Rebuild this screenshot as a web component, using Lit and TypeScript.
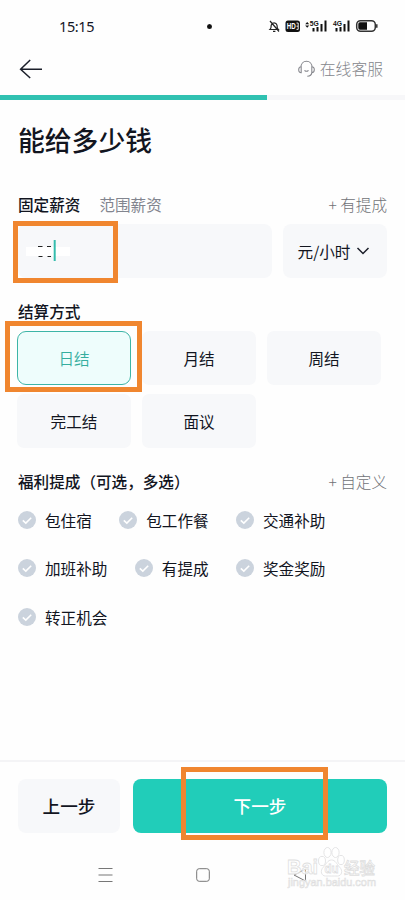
import { LitElement, html, css, svg } from "lit";
import { customElement } from "lit/decorators.js";
import { classMap } from "lit/directives/class-map.js";

const check = html`<svg class="check" width="18" height="18" viewBox="0 0 18 18">
  <circle cx="9" cy="9" r="9" fill="#cbd3dd" />
  <path d="M4.800 9.400l3 2.700 5.400-5.300" fill="none" stroke="#fff" stroke-width="1.600" />
</svg>`;

const bars = (x: number) => svg`<path d="M${x} 17.500v-3.500M${x + 4} 17.500v-4.500M${x + 8} 17.500V10M${x + 12} 17.500V6.500" stroke="#111" stroke-width="2" fill="none"/>`;

@customElement("app-root")
export class AppRoot extends LitElement {
  static styles = css`
    :host {
      display: block;
      font-family: "Noto Sans CJK SC", "Noto Sans", sans-serif;
      color: #12151f;
      font-size: 15.6px;
      line-height: 24px;
    }
    * { box-sizing: border-box; }
    .screen {
      position: relative;
      width: 405px;
      height: 900px;
      background: #fefefe;
      overflow: hidden;
      display: flex;
      flex-direction: column;
    }
    svg { display: block; flex: none; }
    .status { height: 52px; display: flex; align-items: center; padding: 0 25px 0 58px; }
    .time { font: 14.5px/20px "Noto Sans", sans-serif; width: 150px; letter-spacing: -0.4px; padding-left: 1px; }
    .camera { width: 5px; height: 5px; border-radius: 50%; background: #111; margin: 0 54px 0 0; }
    .header { height: 43px; display: flex; align-items: center; justify-content: space-between; padding: 0 22px 10px 18px; }
    .service { display: flex; align-items: center; gap: 5px; color: #85868c; font-weight: 300; font-size: 15.8px; }
    .progress { height: 5px; background: #f7f7f9; flex: none; }
    .progress-fill { height: 5px; width: 267px; background: #30c1b1; }
    .content { padding: 0 18px; }
    h1 { margin: 20px 0 0; height: 40px; line-height: 40px; font-size: 26.8px; font-weight: 500; }
    .row { display: flex; height: 24px; align-items: center; }
    .salary { margin-top: 32px; }
    .strong { font-weight: 500; }
    .range { margin-left: 19px; color: #82858f; }
    .add { margin-left: auto; color: #707277; font-weight: 300; }
    .fields { display: flex; gap: 11px; margin-top: 8px; height: 54px; }
    .field { background: #f7f8fa; border-radius: 8px; }
    .amount { width: 254px; padding: 14px 8px; }
    .unit { width: 104px; display: flex; align-items: center; justify-content: center; gap: 6px; padding: 0 2px 1px 0; }
    .settle { margin-top: 21px; }
    .options { display: grid; grid-template-columns: 114px 114px 114px; column-gap: 11px; row-gap: 9px; margin: 8px 0 0 -1px; }
    .option { height: 54px; background: #f7f8fa; border-radius: 7px; display: flex; align-items: center; justify-content: center; padding-bottom: 1px; }
    .option.selected { background: #eefdfc; border: 1px solid #3db5a7; border-radius: 9px; color: #35ae9f; font-weight: 350; }
    .benefit { margin-top: 21px; }
    .checks { display: flex; flex-wrap: wrap; column-gap: 27.4px; row-gap: 24.4px; margin-top: 15px; }
    .item { display: flex; align-items: center; gap: 9px; height: 24px; }
    .footer { margin-top: auto; height: 140px; border-top: 2px solid #f4f4f6; flex: none; }
    .buttons { display: flex; gap: 13px; padding: 16.5px 18px 0; }
    .btn { height: 54px; border-radius: 8px; display: flex; align-items: center; justify-content: center; font-size: 17.6px; font-weight: 500; }
    .prev { width: 102px; background: #f7f8fa; }
    .next { flex: 1; background: #21cdb9; color: #fff; }
    .nav { display: flex; justify-content: space-between; padding: 34.5px 98px 0; }
    .mark { position: absolute; border: 5px solid #f0862f; }
    .mark-amount { left: 13px; top: 221px; width: 105px; height: 62px; }
    .mark-day { left: 5px; top: 321px; width: 137px; height: 71px; }
    .mark-next { left: 181px; top: 767px; width: 147px; height: 73px; }
    .watermark { position: absolute; left: 284px; top: 842px; }
  `;

  private options = ["日结", "月结", "周结", "完工结", "面议"];
  private benefits = ["包住宿", "包工作餐", "交通补助", "加班补助", "有提成", "奖金奖励", "转正机会"];

  render() {
    return html`<div class="screen">
      <div class="status">
        <span class="time">15:15</span><span class="camera"></span>
        <svg width="114" height="24" viewBox="0 0 114 24">
          <path d="M4 15.500c1.300-1.300 1.200-2.600 1.200-4.300a3 3 0 0 1 5.800 0c0 1.700.1 3 1.300 4.300zM7 17.300h2.400M4 7l9 10.500" fill="none" stroke="#222" stroke-width="1.200" />
          <rect x="19.500" y="6.500" width="14.500" height="11.500" rx="2.500" fill="#111" />
          <text x="20.800" y="15.300" font-family="Liberation Sans" font-size="8.300" font-weight="700" textLength="9" lengthAdjust="spacingAndGlyphs" fill="#fff">HD</text>
          <path d="M30.500 9h1.700v6.400h-1.700M30.500 12.200h1.700" fill="none" stroke="#fff" stroke-width=".9" />
          <path d="M39.200 10.300l2-2.200 2 2.200zM39.200 11.600l2 2.200 2-2.200z" fill="#111" />
          <text x="43.700" y="12" font-family="Liberation Sans" font-size="7.600" font-weight="700" textLength="9" lengthAdjust="spacingAndGlyphs" fill="#111">5G</text>
          ${bars(47.500)}
          <text x="67" y="12" font-family="Liberation Sans" font-size="7.600" font-weight="700" textLength="9" lengthAdjust="spacingAndGlyphs" fill="#111">4G</text>
          ${bars(70.500)}
          <rect x="90.700" y="6.700" width="18.600" height="10.600" rx="3.800" fill="none" stroke="#333" stroke-width="1.500" />
          <path d="M94 8.300h7v7.400h-7q-1.700 0-1.700-1.700v-4q0-1.700 1.700-1.700" fill="#111" />
          <path d="M110.800 10.300v3.400" stroke="#333" stroke-width="1.500" />
        </svg>
      </div>
      <div class="header">
        <svg width="26" height="22" viewBox="0 0 26 22"><path d="M12.200 2L2.600 11.300 12.200 20M2.600 11.300H24" fill="none" stroke="#1b1f2a" stroke-width="1.500" /></svg>
        <div class="service">
          <svg width="17" height="18" viewBox="0 0 17 18"><path d="M2.900 7.500C2.900 3.800 5.200 1.300 8.500 1.300s5.600 2.500 5.600 6.200M3.200 6.800v5.800C1.500 12.600.7 11.600.7 9.700S1.500 6.800 3.200 6.800zM13.800 6.800v5.800c1.700 0 2.500-1 2.500-2.900s-.8-2.900-2.500-2.900zM13.800 12.600c-.2 2.400-1.500 3.500-4.500 3.700M6.500 10.300q2 2 4 0" fill="none" stroke="#85868c" stroke-width="1.050" /></svg>
          <span>在线客服</span>
        </div>
      </div>
      <div class="progress"><div class="progress-fill"></div></div>
      <div class="content">
        <h1>能给多少钱</h1>
        <div class="row salary"><span class="strong">固定薪资</span><span class="range">范围薪资</span><span class="add">+ 有提成</span></div>
        <div class="fields">
          <div class="field amount">
            <svg width="46" height="26" viewBox="0 0 46 26">
              <rect y="9" width="44" height="9" fill="#fff" />
              <path d="M12 8.500h4.500M21 8.500h4M12.500 18.500h4M21.500 18.500h3.500" stroke="#222" stroke-width="1.200" />
              <path d="M28.700 2v21" stroke="#35bdad" stroke-width="2" />
            </svg>
          </div>
          <div class="field unit">元/小时<svg width="14" height="10" viewBox="0 0 14 10"><path d="M1.500 2L7 7.500 12.500 2" fill="none" stroke="#1b1f2a" stroke-width="1.500" /></svg></div>
        </div>
        <div class="row settle strong">结算方式</div>
        <div class="options">${this.options.map((o, i) => html`<div class=${classMap({ option: true, selected: i === 0 })}>${o}</div>`)}</div>
        <div class="row benefit"><span class="strong">福利提成（可选，多选）</span><span class="add">+ 自定义</span></div>
        <div class="checks">${this.benefits.map((b) => html`<div class="item">${check}<span>${b}</span></div>`)}</div>
      </div>
      <div class="footer">
        <div class="buttons"><div class="btn prev">上一步</div><div class="btn next">下一步</div></div>
        <div class="nav">
          <svg width="15" height="16" viewBox="0 0 15 16"><path d="M.5 1.500h14M.5 8h14M.5 14.500h14" stroke="#777" stroke-width="1" /></svg>
          <svg width="14" height="16" viewBox="0 0 14 16"><rect x=".7" y="1.700" width="12.600" height="12.600" rx="2.500" fill="none" stroke="#777" /></svg>
          <svg width="14" height="16" viewBox="0 0 14 16"><path d="M12.500 2v12L1 8z" fill="none" stroke="#777" stroke-linejoin="round" /></svg>
        </div>
      </div>
      <div class="mark mark-amount"></div>
      <div class="mark mark-day"></div>
      <div class="mark mark-next"></div>
      <svg class="watermark" width="100" height="50" viewBox="0 0 100 50">
        <g fill="#fff" fill-opacity=".8" stroke="#dededf" stroke-width=".8">
          <text x="3" y="32" font-family="Liberation Sans" font-size="21" font-weight="700" textLength="31" lengthAdjust="spacingAndGlyphs">Bai</text>
          <ellipse cx="38" cy="19" rx="3.500" ry="4.600" />
          <ellipse cx="43.500" cy="10.500" rx="3.600" ry="5" />
          <ellipse cx="51.500" cy="10.500" rx="3.600" ry="5" />
          <ellipse cx="57" cy="18" rx="3.300" ry="4.600" />
          <path d="M47.500 18c4 0 5 4 8 7 4 4 2 9-2 9-3 0-9 0-12 0-4 0-6-5-2-9 3-3 4-7 8-7z" />
          <text x="40.500" y="31" font-family="Liberation Sans" font-size="13" font-weight="700" textLength="14" lengthAdjust="spacingAndGlyphs">du</text>
          <text x="60" y="32" font-family="Noto Sans CJK SC" font-size="15.500" font-weight="500" textLength="31">经验</text>
          <text x="4" y="44" font-family="Liberation Sans" font-size="10.500" textLength="88" lengthAdjust="spacingAndGlyphs" stroke-width=".6">jingyan.baidu.com</text>
        </g>
      </svg>
    </div>`;
  }
}
